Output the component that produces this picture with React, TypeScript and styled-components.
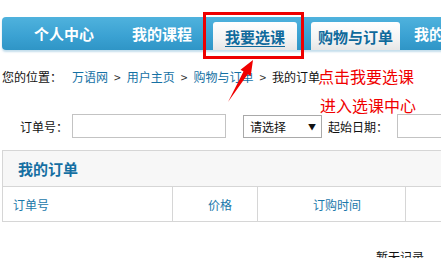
import React from "react";
import styled, { createGlobalStyle } from "styled-components";

const Global = createGlobalStyle`
  html, body { margin: 0; padding: 0; background: #fff; overflow: hidden; }
  body { font-family: "Noto Sans CJK SC", "Liberation Sans", sans-serif; font-size: 12px; color: #222; }
`;

const Page = styled.div`
  position: relative;
  width: 441px;
  height: 258px;
  overflow: hidden;
`;

const NavWrap = styled.div`
  padding: 17px 0 0 2px;
`;

const NavBar = styled.div`
  display: flex;
  align-items: flex-end;
  height: 33px;
  width: 460px;
  border-radius: 4px;
  background: linear-gradient(#4fb2dd, #3aa1d2 60%, #2f95c6);
  box-shadow: 0 2px 2px rgba(90, 160, 200, 0.35);
`;

const NavItem = styled.div<{ $w: number; $ml?: number; $active?: boolean; $under?: boolean; $start?: boolean }>`
  box-sizing: border-box;
  flex: none;
  width: ${(p) => p.$w}px;
  margin-left: ${(p) => p.$ml ?? 0}px;
  height: ${(p) => (p.$active ? 28 : 33)}px;
  display: flex;
  align-items: center;
  justify-content: ${(p) => (p.$start ? "flex-start" : "center")};
  font-size: 15px;
  font-weight: bold;
  color: ${(p) => (p.$active ? "#0f6a9c" : "#fff")};
  text-decoration: ${(p) => (p.$under ? "underline" : "none")};
  text-underline-offset: 3px;
  border-radius: 3px 3px 0 0;
  background: ${(p) => (p.$active ? "linear-gradient(#ffffff, #f4f4f4 60%, #e6e6e6)" : "transparent")};
  white-space: nowrap;
  overflow: hidden;
`;

const Crumbs = styled.div`
  display: flex;
  align-items: center;
  height: 20px;
  margin: 16px 0 0 2px;
  font-size: 12px;
  white-space: nowrap;
`;

const CrumbLabel = styled.span`
  color: #111;
  margin-right: 10px;
`;

const CrumbLink = styled.span`
  color: #1571a4;
`;

const Sep = styled.span`
  color: #333;
  margin: 0 6px;
`;

const Current = styled.span`
  color: #111;
`;

const FilterRow = styled.div`
  display: flex;
  align-items: center;
  margin: 28px 0 0 20px;
  height: 24px;
  white-space: nowrap;
`;

const Label = styled.span<{ $mr: number }>`
  color: #111;
  font-size: 12px;
  margin-right: ${(p) => p.$mr}px;
`;

const TextInput = styled.div<{ $w: number; $mr?: number }>`
  box-sizing: border-box;
  flex: none;
  width: ${(p) => p.$w}px;
  height: 24px;
  border: 1px solid #c3c3c3;
  background: #fff;
  margin-right: ${(p) => p.$mr ?? 0}px;
`;

const Select = styled.div`
  box-sizing: border-box;
  flex: none;
  width: 79px;
  height: 23px;
  border: 1px solid #a9a9a9;
  display: flex;
  align-items: center;
  justify-content: space-between;
  padding: 0 5px 0 6px;
  margin-right: 6px;
  font-size: 12px;
  color: #111;
`;

const Caret = styled.span`
  font-size: 8px;
  color: #111;
`;

const Panel = styled.div`
  margin: 12px 0 0 2px;
  width: 460px;
  border: 1px solid #d6d6d6;
  border-right: none;
`;

const PanelHead = styled.div`
  height: 35px;
  background: #f7f7f7;
  display: flex;
  align-items: center;
  padding-left: 15px;
  font-size: 15px;
  font-weight: bold;
  color: #156fa2;
  border-bottom: 1px solid #d6d6d6;
`;

const HeadRow = styled.div`
  display: grid;
  grid-template-columns: 170px 85px 148px 1fr;
  height: 34px;
`;

const Cell = styled.div<{ $pl: number; $last?: boolean }>`
  display: flex;
  align-items: center;
  padding-left: ${(p) => p.$pl}px;
  border-right: ${(p) => (p.$last ? "none" : "1px solid #d6d6d6")};
  color: #1a78aa;
  font-size: 12px;
`;

const Empty = styled.div`
  margin: 26px 0 0 376px;
  font-size: 12px;
  color: #111;
`;

const RedBox = styled.div`
  position: absolute;
  left: 203px;
  top: 12px;
  width: 101px;
  height: 47px;
  box-sizing: border-box;
  border: 3px solid #ee0000;
  pointer-events: none;
`;

const Note = styled.div<{ $x: number; $y: number }>`
  position: absolute;
  left: ${(p) => p.$x}px;
  top: ${(p) => p.$y}px;
  color: #f00000;
  font-size: 16px;
  white-space: nowrap;
  font-family: "Noto Sans CJK SC", sans-serif;
`;

const Arrow = styled.svg`
  position: absolute;
  left: 0;
  top: 0;
  pointer-events: none;
`;

export default function App() {
  return (
    <Page>
      <Global />
      <NavWrap>
        <NavBar>
          <NavItem $w={124}>个人中心</NavItem>
          <NavItem $w={72}>我的课程</NavItem>
          <NavItem $w={84} $ml={15} $active $under>
            我要选课
          </NavItem>
          <NavItem $w={89} $ml={14} $active>
            购物与订单
          </NavItem>
          <NavItem $w={27} $ml={14} $start>
            我的
          </NavItem>
        </NavBar>
      </NavWrap>
      <Crumbs>
        <CrumbLabel>您的位置：</CrumbLabel>
        <CrumbLink>万语网</CrumbLink>
        <Sep>&gt;</Sep>
        <CrumbLink>用户主页</CrumbLink>
        <Sep>&gt;</Sep>
        <CrumbLink>购物与订单</CrumbLink>
        <Sep>&gt;</Sep>
        <Current>我的订单</Current>
      </Crumbs>
      <FilterRow>
        <Label $mr={4}>订单号：</Label>
        <TextInput $w={154} $mr={17} />
        <Select>
          <span>请选择</span>
          <Caret>▼</Caret>
        </Select>
        <Label $mr={9}>起始日期：</Label>
        <TextInput $w={80} />
      </FilterRow>
      <Panel>
        <PanelHead>我的订单</PanelHead>
        <HeadRow>
          <Cell $pl={10}>订单号</Cell>
          <Cell $pl={35}>价格</Cell>
          <Cell $pl={55}>订购时间</Cell>
          <Cell $pl={10} $last />
        </HeadRow>
      </Panel>
      <Empty>暂无记录</Empty>
      <RedBox />
      <Note $x={318} $y={64}>点击我要选课</Note>
      <Note $x={320} $y={93}>进入选课中心</Note>
      <Arrow width="441" height="258" viewBox="0 0 441 258">
        <polygon
          points="228,102 243.5,71.6 240.5,69.7 253,60 250.7,76.1 247.7,74.2"
          fill="#f00000"
        />
      </Arrow>
    </Page>
  );
}
